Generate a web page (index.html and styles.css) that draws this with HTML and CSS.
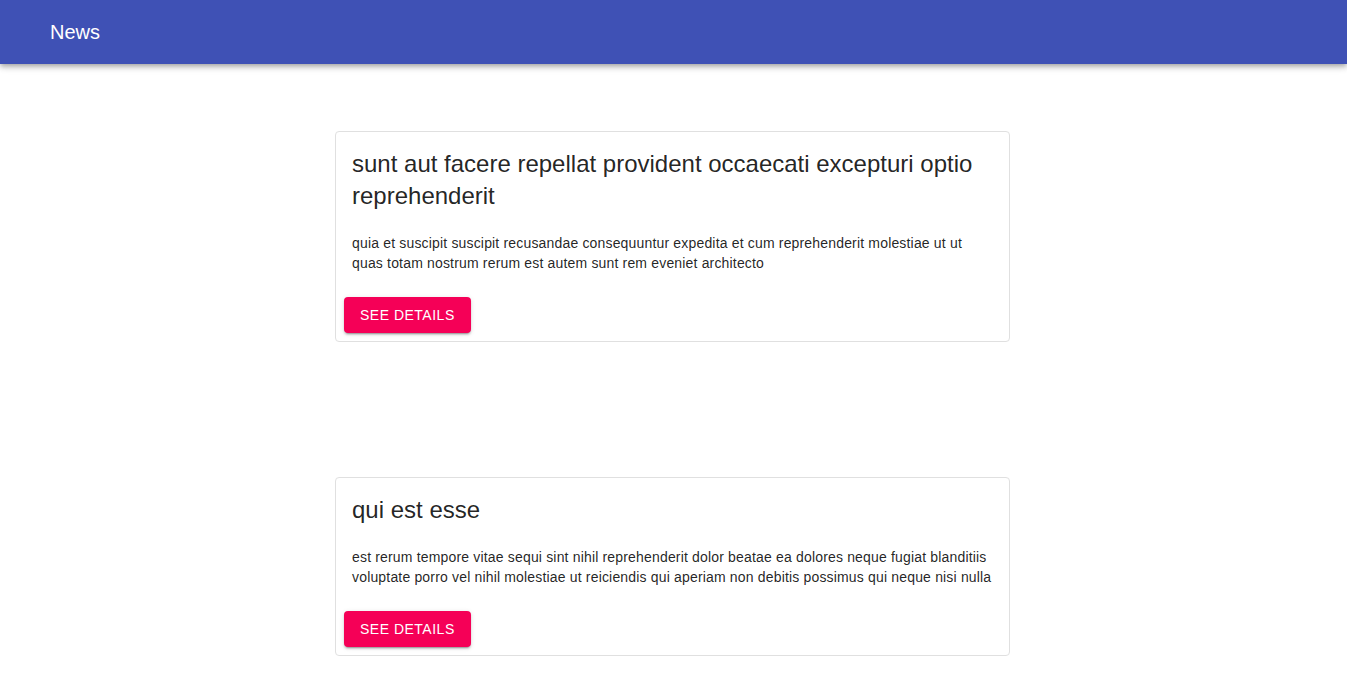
FILE: index.html
```html
<!DOCTYPE html>
<html>
<head>
<meta charset="utf-8">
<link rel="stylesheet" href="styles.css">
</head>
<body>
<header class="appbar">
  <div class="appbar-title">News</div>
</header>
<main class="feed">
  <article class="card">
    <div class="card-content">
      <h2 class="card-title">sunt aut facere repellat provident occaecati excepturi optio reprehenderit</h2>
      <p class="card-body">quia et suscipit suscipit recusandae consequuntur expedita et cum reprehenderit molestiae ut ut quas totam nostrum rerum est autem sunt rem eveniet architecto</p>
    </div>
    <div class="card-actions">
      <button class="btn">See details</button>
    </div>
  </article>
  <article class="card">
    <div class="card-content">
      <h2 class="card-title">qui est esse</h2>
      <p class="card-body">est rerum tempore vitae sequi sint nihil reprehenderit dolor beatae ea dolores neque fugiat blanditiis voluptate porro vel nihil molestiae ut reiciendis qui aperiam non debitis possimus qui neque nisi nulla</p>
    </div>
    <div class="card-actions">
      <button class="btn">See details</button>
    </div>
  </article>
</main>
</body>
</html>
```
FILE: styles.css
```css
* { box-sizing: border-box; }
html, body { margin: 0; padding: 0; background: #fff; }
body { font-family: "Liberation Sans", Arial, sans-serif; color: rgba(0,0,0,0.87); }

.appbar {
  height: 64px;
  background: #3f51b5;
  color: #fff;
  display: flex;
  align-items: center;
  padding: 0 50px;
  box-shadow: 0 2px 4px -1px rgba(0,0,0,0.2), 0 4px 5px 0 rgba(0,0,0,0.14), 0 1px 10px 0 rgba(0,0,0,0.12);
  position: relative;
  z-index: 1;
}
.appbar-title { font-size: 20px; font-weight: 500; line-height: 1; }

.feed {
  display: flex;
  flex-direction: column;
  align-items: flex-start;
  padding-top: 67px;
  padding-left: 335px;
  gap: 135px;
}

.card {
  width: 675px;
  border: 1px solid #e0e0e0;
  border-radius: 4px;
  background: #fff;
}
.card-content { padding: 16px 16px 16px; }
.card-title {
  margin: 0 0 21px;
  font-size: 24px;
  font-weight: 400;
  line-height: 32px;
  color: rgba(0,0,0,0.87);
}
.card-body {
  margin: 0;
  font-size: 14px;
  letter-spacing: 0.17px;
  line-height: 20px;
  color: rgba(0,0,0,0.87);
}
.card-actions { padding: 8px; display: flex; }
.btn {
  font-family: "Liberation Sans", Arial, sans-serif;
  font-size: 14px;
  letter-spacing: 0.5px;
  text-transform: uppercase;
  color: #fff;
  background: #f50057;
  border: none;
  border-radius: 4px;
  height: 36px;
  padding: 0 16px;
  box-shadow: 0 3px 1px -2px rgba(0,0,0,0.2), 0 2px 2px 0 rgba(0,0,0,0.14), 0 1px 5px 0 rgba(0,0,0,0.12);
  cursor: pointer;
}
```
